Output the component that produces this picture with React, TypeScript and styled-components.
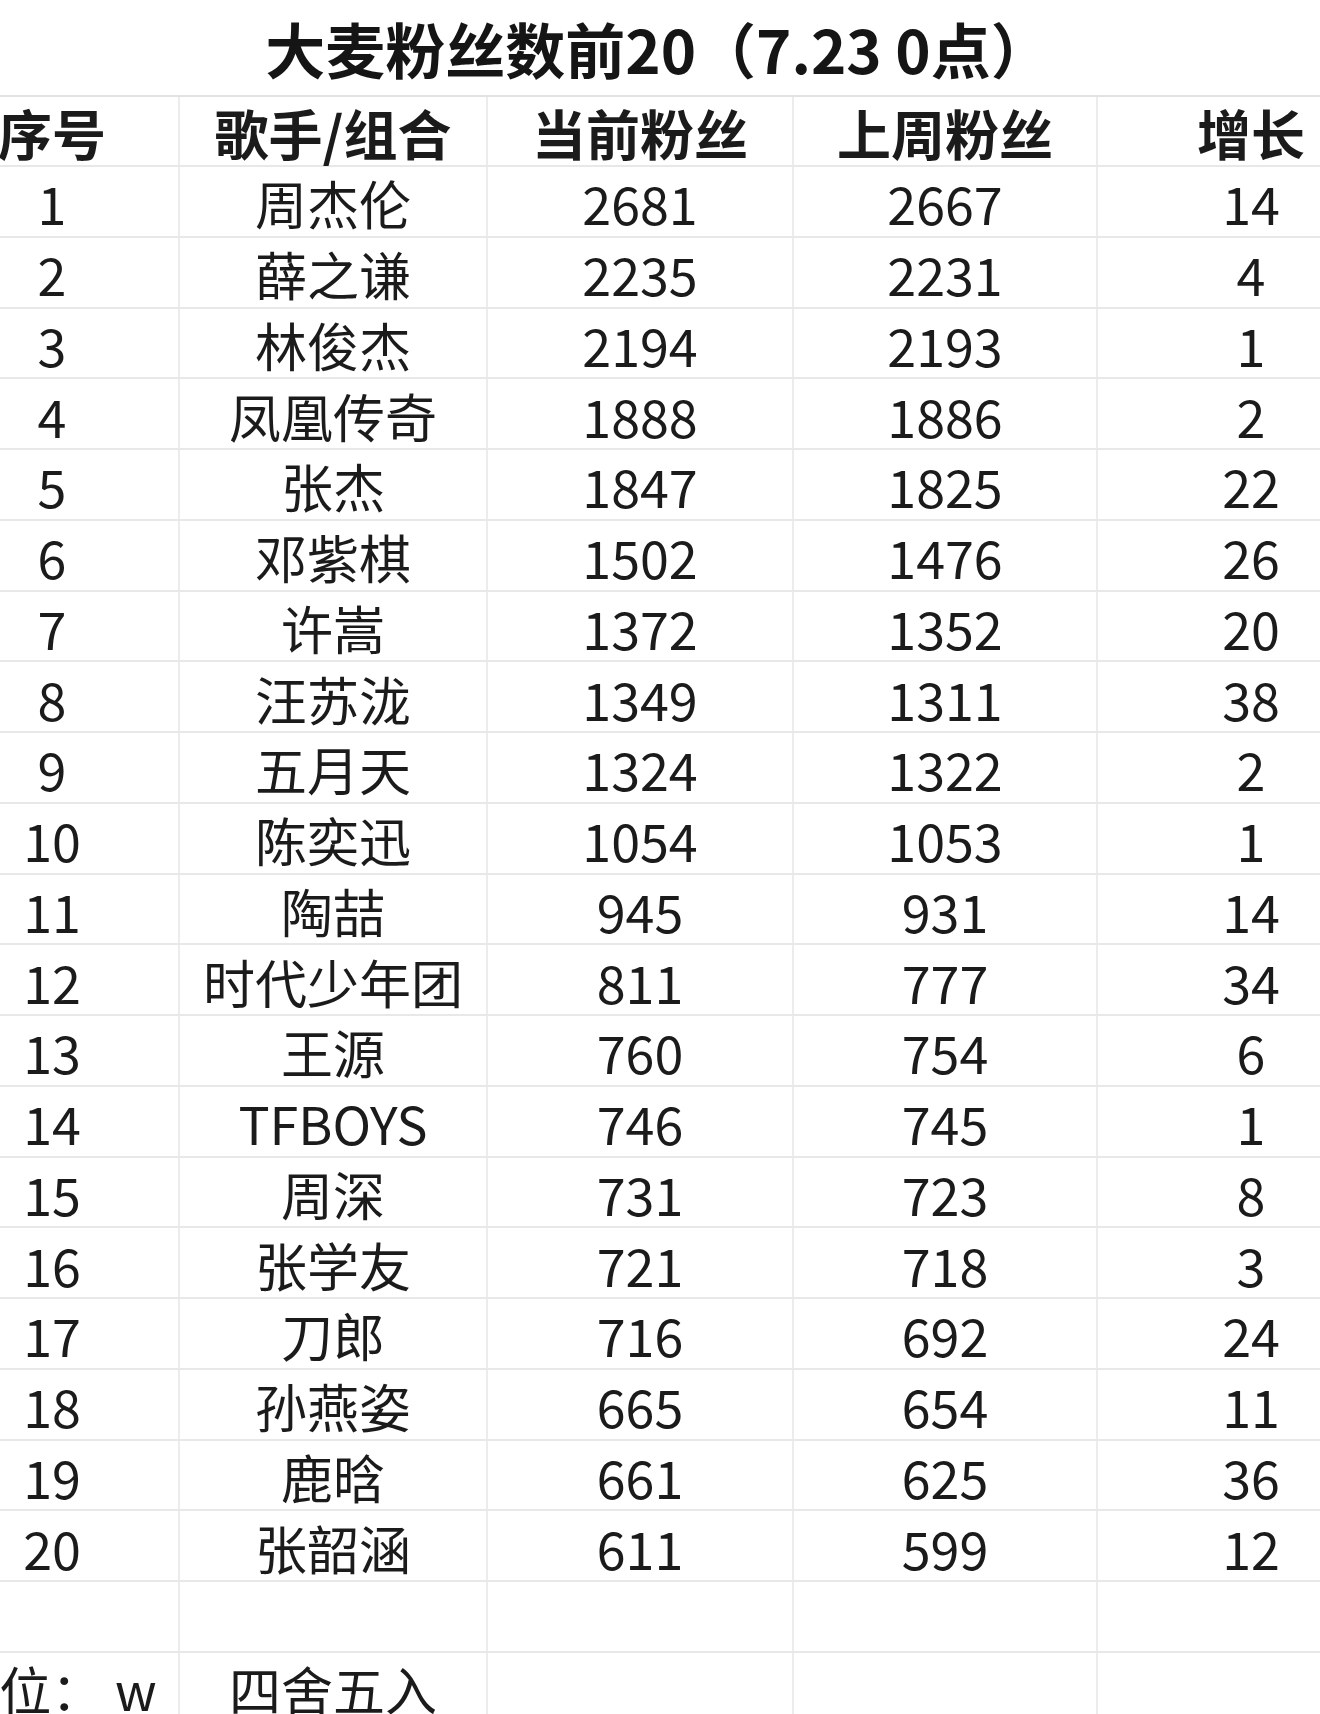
import styled, { createGlobalStyle } from 'styled-components';

const GlobalStyle = createGlobalStyle`
  html, body {
    margin: 0;
    padding: 0;
    background: #ffffff;
  }
  body {
    font-family: "Noto Sans CJK SC", "Noto Sans", sans-serif;
    color: #1b1b1b;
  }
`;

const COLS = '254px 308px 306px 304px 308px';

const Page = styled.div`
  width: 1320px;
  height: 1714px;
  overflow: hidden;
  background: #ffffff;
`;

const Title = styled.h1`
  margin: 0;
  height: 95px;
  display: flex;
  align-items: center;
  justify-content: center;
  padding-right: 4px;
  font-size: 60px;
  font-weight: 700;
  color: #151515;
`;

const Sheet = styled.div`
  margin-left: -74px;
  width: 1480px;
  display: flex;
  flex-direction: column;
  border-top: 2px solid #e2e2e2;
`;

const Row = styled.div<{ $height?: number }>`
  display: grid;
  grid-template-columns: ${COLS};
  height: ${(p) => p.$height ?? 70.75}px;
  border-bottom: 2px solid #e8e8e8;
  box-sizing: border-box;
`;

const Cell = styled.div<{ $head?: boolean }>`
  display: flex;
  align-items: center;
  justify-content: center;
  border-right: 2px solid #ececec;
  font-size: ${(p) => (p.$head ? 54 : 52)}px;
  font-weight: ${(p) => (p.$head ? 700 : 400)};
  line-height: 1;
  white-space: nowrap;
  padding-top: 4px;
  box-sizing: border-box;
`;

type Item = [string, number, number, number];

const data: Item[] = [
  ['周杰伦', 2681, 2667, 14],
  ['薛之谦', 2235, 2231, 4],
  ['林俊杰', 2194, 2193, 1],
  ['凤凰传奇', 1888, 1886, 2],
  ['张杰', 1847, 1825, 22],
  ['邓紫棋', 1502, 1476, 26],
  ['许嵩', 1372, 1352, 20],
  ['汪苏泷', 1349, 1311, 38],
  ['五月天', 1324, 1322, 2],
  ['陈奕迅', 1054, 1053, 1],
  ['陶喆', 945, 931, 14],
  ['时代少年团', 811, 777, 34],
  ['王源', 760, 754, 6],
  ['TFBOYS', 746, 745, 1],
  ['周深', 731, 723, 8],
  ['张学友', 721, 718, 3],
  ['刀郎', 716, 692, 24],
  ['孙燕姿', 665, 654, 11],
  ['鹿晗', 661, 625, 36],
  ['张韶涵', 611, 599, 12],
];

export default function App() {
  return (
    <Page>
      <GlobalStyle />
      <Title>大麦粉丝数前20（7.23 0点）</Title>
      <Sheet>
        <Row $height={70}>
          <Cell $head>序号</Cell>
          <Cell $head>歌手/组合</Cell>
          <Cell $head>当前粉丝</Cell>
          <Cell $head>上周粉丝</Cell>
          <Cell $head>增长</Cell>
        </Row>
        {data.map(([name, now, last, grow], i) => (
          <Row key={name}>
            <Cell>{i + 1}</Cell>
            <Cell>{name}</Cell>
            <Cell>{now}</Cell>
            <Cell>{last}</Cell>
            <Cell>{grow}</Cell>
          </Row>
        ))}
        <Row>
          <Cell />
          <Cell />
          <Cell />
          <Cell />
          <Cell />
        </Row>
        <Row>
          <Cell>单位： w</Cell>
          <Cell>四舍五入</Cell>
          <Cell />
          <Cell />
          <Cell />
        </Row>
      </Sheet>
    </Page>
  );
}
